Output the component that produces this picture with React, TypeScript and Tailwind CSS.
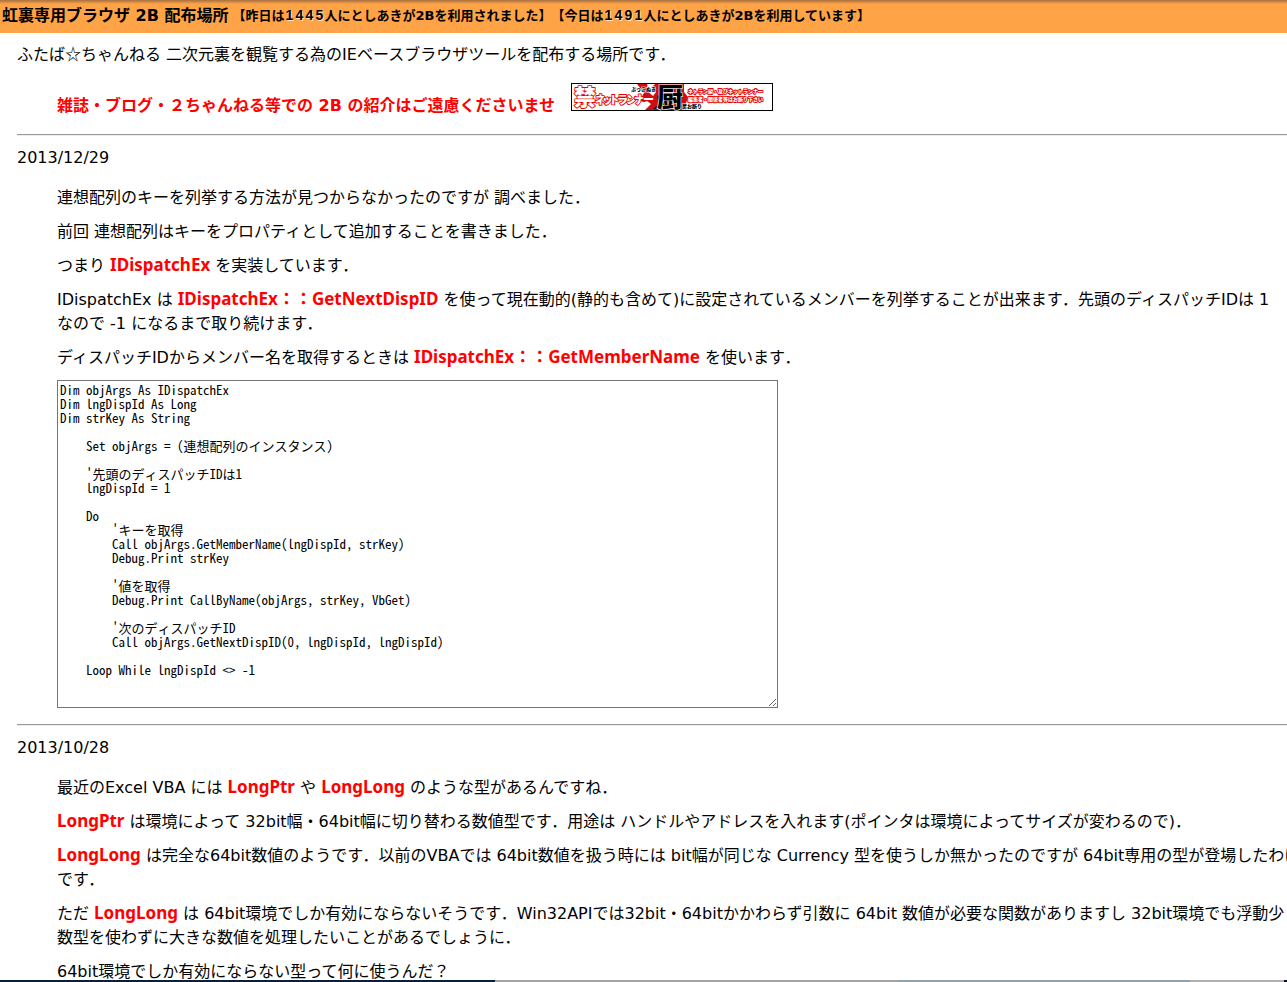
import React from 'react';

interface CounterProps {
  value: string;
}

const Counter: React.FC<CounterProps> = ({ value }) => (
  <span className="inline-flex font-['Liberation_Sans'] text-[14px] [text-shadow:1px_1px_0_#ffe4c4]">
    {value.split('').map((digit, i) => (
      <span key={i} className="w-[10px] text-center">{digit}</span>
    ))}
  </span>
);

const Em: React.FC<{ children: React.ReactNode }> = ({ children }) => (
  <strong className="font-bold text-[#ff0000]">{children}</strong>
);

const Name: React.FC<{ children: React.ReactNode }> = ({ children }) => (
  <strong className="font-['Noto_Sans','Noto_Sans_CJK_JP',sans-serif] text-[17px] leading-4 font-bold text-[#ff0000]">
    {children}
  </strong>
);

const Rule: React.FC = () => (
  <hr className="h-[2px] border-t border-b border-t-[#9a9a9a] border-b-[#eeeeee]" />
);

const Banner: React.FC = () => (
  <svg
    viewBox="0 0 202 28"
    className="ml-4 inline h-7 w-[202px] align-baseline"
    role="img"
    aria-label="禁ネットランナー厨"
    fontFamily="'Noto Sans CJK JP', sans-serif"
    fontWeight="900"
  >
    <rect x="0.5" y="0.5" width="201" height="27" fill="#fff" stroke="#000" />
    {/* red splash behind the middle part */}
    <path d="M66 1h10l3 5 5-5h29v8l4 5-4 13H70l8-7-10-2 5-8z" fill="#cc0f14" />
    <path d="M77 1l8 8-3 4-7-6zM66 22l10-4 4 3-6 6h-9z" fill="#fff" />
    <path d="M86 13l12-4v17H82l6-5z" fill="#2a0505" />
    <g fill="#fff" stroke="#e60000" strokeWidth="1.8" strokeLinejoin="round" paintOrder="stroke">
      <text x="3" y="22" fontSize="22">禁</text>
      <text x="24 31 38 46 55 63 72" y="21" fontSize="11">ネットランナー</text>
    </g>
    <text x="60" y="8" fontSize="5" fill="#000" stroke="#fff" strokeWidth="1" paintOrder="stroke">
      ぶっこぬき
    </text>
    <text x="86" y="24" fontSize="26" fill="#000" stroke="#fff" strokeWidth="1.2" paintOrder="stroke">
      厨
    </text>
    <text x="111" y="25" fontSize="5" fill="#000" stroke="#fff" strokeWidth="1" paintOrder="stroke">
      房お断り
    </text>
    <g fill="#fff" stroke="#e60000" strokeWidth="1.8" strokeLinejoin="round" paintOrder="stroke">
      <text x="117" y="10" fontSize="5">ネトラン厨・及びネットランナー</text>
      <text x="117" y="18" fontSize="5">編集者・関係者等はお断り下さい</text>
    </g>
  </svg>
);

const source = `Dim objArgs As IDispatchEx
Dim lngDispId As Long
Dim strKey As String

    Set objArgs = (連想配列のインスタンス)

    '先頭のディスパッチIDは1
    lngDispId = 1

    Do
        'キーを取得
        Call objArgs.GetMemberName(lngDispId, strKey)
        Debug.Print strKey

        '値を取得
        Debug.Print CallByName(objArgs, strKey, VbGet)

        '次のディスパッチID
        Call objArgs.GetNextDispID(0, lngDispId, lngDispId)

    Loop While lngDispId <> -1
`;

const App: React.FC = () => {
  return (
    <div
      lang="ja"
      className="h-screen overflow-hidden bg-white font-['DejaVu_Sans','Noto_Sans_CJK_JP',sans-serif] text-base leading-6 text-black"
    >
      <header className="flex h-[33px] items-center bg-[#ffa347] bg-linear-to-b from-[#a87040] to-[#ffa347] to-[4px] pb-[2px] pl-[2px] font-bold whitespace-nowrap">
        <h1 className="text-base">虹裏専用ブラウザ 2B 配布場所</h1>
        <p className="pl-1 text-[13px]">
          【昨日は<Counter value="1445" />人にとしあきが2Bを利用されました】
        </p>
        <p className="text-[13px]">
          【今日は<Counter value="1491" />人にとしあきが2Bを利用しています】
        </p>
      </header>

      <main className="-mr-4 pt-2 pl-[17px]">
        <p>
          ふたば<span className="font-['Noto_Sans_CJK_JP']">☆</span>ちゃんねる 二次元裏を観覧する為のIEベースブラウザツールを配布する場所です．
        </p>
        <p className="my-4 pl-10">
          <Em>雑誌・ブログ・２ちゃんねる等での 2B の紹介はご遠慮くださいませ</Em>
          <Banner />
        </p>

        <Rule />
        <section>
          <h2 className="mt-[10px] mb-4">2013/12/29</h2>
          <div className="mb-4 flex flex-col gap-[10px] pl-10">
            <p>連想配列のキーを列挙する方法が見つからなかったのですが 調べました．</p>
            <p>前回 連想配列はキーをプロパティとして追加することを書きました．</p>
            <p>つまり <Name>IDispatchEx</Name> を実装しています．</p>
            <p>
              IDispatchEx は <Name>IDispatchEx：：GetNextDispID</Name> を使って現在動的(静的も含めて)に設定されているメンバーを列挙することが出来ます．先頭のディスパッチIDは 1
              <br />
              なので -1 になるまで取り続けます．
            </p>
            <p>ディスパッチIDからメンバー名を取得するときは <Name>IDispatchEx：：GetMemberName</Name> を使います．</p>
            <textarea
              aria-label="サンプルコード"
              rows={23}
              defaultValue={source}
              spellCheck={false}
              className="w-[721px] max-w-full border border-[#767676] p-[2px] font-['Noto_Sans_Mono_CJK_JP','Noto_Sans_CJK_JP',monospace] text-[13px] leading-[14px]"
            />
          </div>
        </section>

        <Rule />
        <section>
          <h2 className="mt-[10px] mb-4">2013/10/28</h2>
          <div className="flex flex-col gap-[10px] pl-10">
            <p>最近のExcel VBA には <Name>LongPtr</Name> や <Name>LongLong</Name> のような型があるんですね．</p>
            <p>
              <Name>LongPtr</Name> は環境によって 32bit幅・64bit幅に切り替わる数値型です．用途は ハンドルやアドレスを入れます(ポインタは環境によってサイズが変わるので)．
            </p>
            <p>
              <Name>LongLong</Name> は完全な64bit数値のようです．以前のVBAでは 64bit数値を扱う時には bit幅が同じな Currency 型を使うしか無かったのですが 64bit専用の型が登場したわけ
              <br />
              です．
            </p>
            <p>
              ただ <Name>LongLong</Name> は 64bit環境でしか有効にならないそうです．Win32APIでは32bit・64bitかかわらず引数に 64bit 数値が必要な関数がありますし 32bit環境でも浮動少
              <br />
              数型を使わずに大きな数値を処理したいことがあるでしょうに．
            </p>
            <p>64bit環境でしか有効にならない型って何に使うんだ？</p>
          </div>
        </section>
      </main>

      {/* window edge */}
      <div className="fixed inset-x-0 bottom-0 flex h-[2px]">
        <div className="w-[495px] bg-[#0a1f3a]" />
        <div className="w-[403px] bg-[#a3a3a3]" />
        <div className="w-[292px] bg-[#8fa3ae]" />
        <div className="flex-1 bg-[#b0b0b0]" />
        <div className="w-[3px] bg-[#0a1020]" />
      </div>
    </div>
  );
};

export default App;
